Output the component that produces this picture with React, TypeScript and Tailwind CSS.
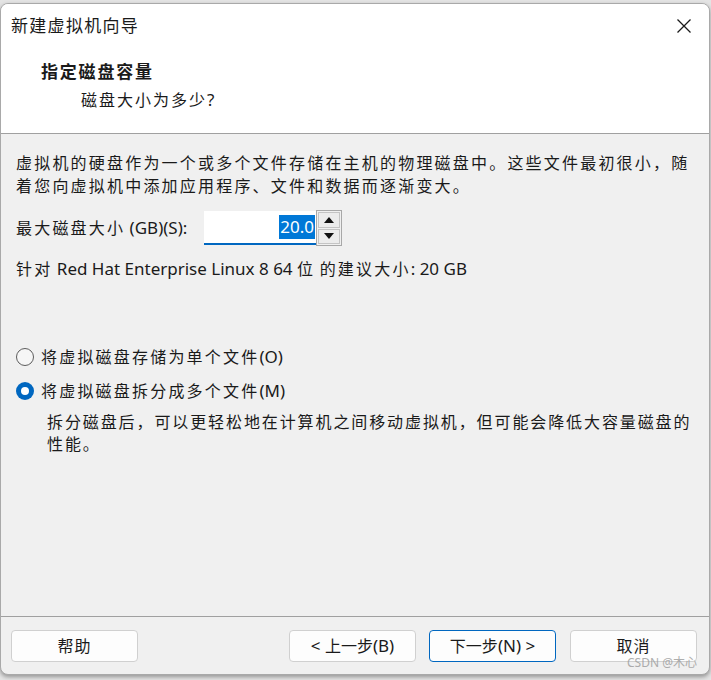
import React from "react";

const isCJK = (ch: string) => /[\u3000-\u303f\u3400-\u9fff\uff00-\uffef]/.test(ch);

function T({
  text,
  track = "tracking-[2.2px]",
  latin = "text-[17px]",
}: {
  text: string;
  track?: string;
  latin?: string;
}) {
  const runs: { cjk: boolean; s: string }[] = [];
  for (const ch of text) {
    const c = isCJK(ch);
    const last = runs[runs.length - 1];
    if (last && last.cjk === c) last.s += ch;
    else runs.push({ cjk: c, s: ch });
  }
  return (
    <>
      {runs.map((r, i) =>
        r.cjk ? (
          <span key={i} className={track}>
            {r.s}
          </span>
        ) : (
          <span key={i} className={latin}>
            {r.s}
          </span>
        )
      )}
    </>
  );
}

function Btn({ children, primary }: { children: React.ReactNode; primary?: boolean }) {
  return (
    <div
      className={
        "w-[127px] h-[32px] flex items-center justify-center rounded-[4px] bg-[#fdfdfd] text-[16px] text-[#1a1a1a] " +
        (primary ? "border border-[#0067c0]" : "border border-[#d0d0d0]")
      }
    >
      {children}
    </div>
  );
}

export default function App() {
  return (
    <div className="w-[711px] h-[680px] bg-[#e4e4e4] pt-[3px] font-['Noto_Sans','Noto_Sans_CJK_SC',sans-serif] text-[#1a1a1a] overflow-hidden">
      <div className="w-[710px] h-[672px] rounded-[8px] border border-[#a9a9a9] bg-[#f0f0f0] overflow-hidden flex flex-col shadow-[0_2px_4px_rgba(0,0,0,0.35)]">
        {/* header */}
        <div className="h-[130px] bg-white border-b border-[#a0a0a0] flex flex-col shrink-0">
          <div className="h-[44px] flex items-center justify-between pl-[10px] pr-[16px]">
            <div className="text-[17px] leading-[24px]">
              <T text="新建虚拟机向导" track="tracking-[1.3px]" />
            </div>
            <svg width="16" height="16" viewBox="0 0 16 16" className="mr-[1px]">
              <path d="M1.5 1.5 L14.5 14.5 M14.5 1.5 L1.5 14.5" stroke="#1a1a1a" strokeWidth="1.3" fill="none" />
            </svg>
          </div>
          <div className="mt-[12px] pl-[40px] text-[17px] leading-[24px] font-bold">
            <T text="指定磁盘容量" track="tracking-[1.8px]" />
          </div>
          <div className="mt-[4px] pl-[80px] text-[16px] leading-[24px]">
            <T text="磁盘大小为多少?" track="tracking-[2px]" />
          </div>
        </div>

        {/* body */}
        <div className="flex-1 flex flex-col pl-[15px] pt-[18px] text-[16px]">
          <div className="leading-[23px]">
            <div className="whitespace-nowrap">
              <T text="虚拟机的硬盘作为一个或多个文件存储在主机的物理磁盘中。这些文件最初很小，随" />
            </div>
            <div className="whitespace-nowrap">
              <T text="着您向虚拟机中添加应用程序、文件和数据而逐渐变大。" />
            </div>
          </div>

          <div className="mt-[12px] flex items-center h-[36px]">
            <div className="w-[188px] leading-[23px] whitespace-nowrap">
              <T text="最大磁盘大小 (GB)(S):" />
            </div>
            <div className="w-[112px] h-[34px] bg-white border-b-2 border-[#0067c0] flex items-center justify-end pr-[1px]">
              <span className="bg-[#0078d7] text-white text-[17px] leading-[24px] px-[1px]">20.0</span>
            </div>
            <div className="w-[26px] h-[36px] border border-[#a8a8a8] flex flex-col p-[1px] gap-[1px] bg-[#f0f0f0]">
              <div className="flex-1 bg-[#ececec] border border-[#c4c4c4] flex items-center justify-center">
                <svg width="10" height="6" viewBox="0 0 10 6">
                  <path d="M5 0 L10 6 L0 6 Z" fill="#111" />
                </svg>
              </div>
              <div className="flex-1 bg-[#ececec] border border-[#c4c4c4] flex items-center justify-center">
                <svg width="10" height="6" viewBox="0 0 10 6">
                  <path d="M0 0 L10 0 L5 6 Z" fill="#111" />
                </svg>
              </div>
            </div>
          </div>

          <div className="mt-[11px] leading-[23px] whitespace-nowrap">
            <T text="针对 Red Hat Enterprise Linux 8 64 位 的建议大小: 20 GB" />
          </div>

          <div className="mt-[64px] flex items-center h-[23px]">
            <div className="w-[18px] h-[18px] rounded-full border border-[#5c5c5c] bg-[#f6f6f6]" />
            <div className="ml-[7px] leading-[23px] whitespace-nowrap">
              <T text="将虚拟磁盘存储为单个文件(O)" />
            </div>
          </div>
          <div className="mt-[11px] flex items-center h-[23px]">
            <div className="w-[18px] h-[18px] rounded-full bg-[#0067c0] flex items-center justify-center">
              <div className="w-[8px] h-[8px] rounded-full bg-white" />
            </div>
            <div className="ml-[7px] leading-[23px] whitespace-nowrap">
              <T text="将虚拟磁盘拆分成多个文件(M)" />
            </div>
          </div>
          <div className="mt-[9px] pl-[31px] leading-[22px]">
            <div className="whitespace-nowrap">
              <T text="拆分磁盘后，可以更轻松地在计算机之间移动虚拟机，但可能会降低大容量磁盘的" track="tracking-[1.9px]" />
            </div>
            <div className="whitespace-nowrap">
              <T text="性能。" track="tracking-[1.9px]" />
            </div>
          </div>
        </div>

        {/* footer */}
        <div className="h-[58px] shrink-0 border-t border-[#a0a0a0] relative">
          <div className="flex items-center pt-[13px] pl-[10px]">
            <Btn>
              <T text="帮助" track="tracking-[1px]" />
            </Btn>
            <div className="ml-[151px]">
              <Btn>
                <span className="whitespace-nowrap">
                  <T text="< 上一步(B)" track="tracking-[0px]" />
                </span>
              </Btn>
            </div>
            <div className="ml-[13px]">
              <Btn primary>
                <span className="whitespace-nowrap">
                  <T text="下一步(N) >" track="tracking-[0px]" />
                </span>
              </Btn>
            </div>
            <div className="ml-[14px]">
              <Btn>
                <T text="取消" track="tracking-[1px]" />
              </Btn>
            </div>
          </div>
          <div className="absolute right-[12px] bottom-[4px] text-[12px] leading-[14px] text-[#9a9a9a] opacity-80">
            CSDN @木心
          </div>
        </div>
      </div>
    </div>
  );
}
